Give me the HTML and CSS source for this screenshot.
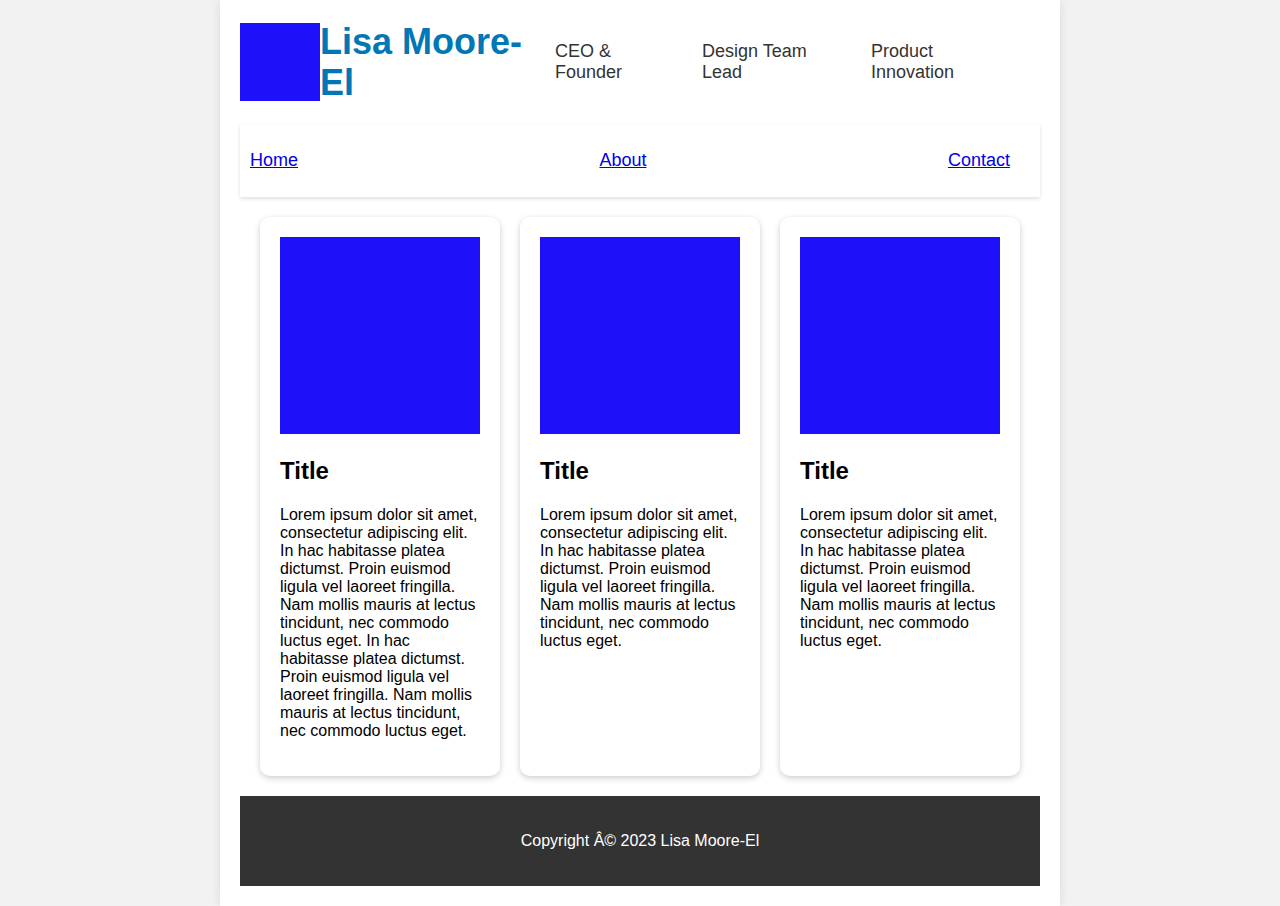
FILE: index.html
```html
<!DOCTYPE html>
<html lang="en">
<head>
<meta charset="utf-8">
<title>Lisa Moore-El</title>
<link rel="stylesheet" href="styles.css">
</head>
<body>
<div class="container">
  <header class="header">
    <div class="logo"></div>
    <h1 class="name">Lisa Moore-El</h1>
    <ul class="roles">
      <li class="role role-1">CEO &amp; Founder</li>
      <li class="role role-2">Design Team Lead</li>
      <li class="role role-3">Product Innovation</li>
    </ul>
  </header>
  <nav class="nav">
    <ul class="nav-list">
      <li><a href="#">Home</a></li>
      <li><a href="#">About</a></li>
      <li><a href="#">Contact</a></li>
    </ul>
  </nav>
  <section class="cards">
    <article class="card">
      <div class="card-img"></div>
      <h2 class="card-title">Title</h2>
      <p class="card-text">Lorem ipsum dolor sit amet, consectetur adipiscing elit. In hac habitasse platea dictumst. Proin euismod ligula vel laoreet fringilla. Nam mollis mauris at lectus tincidunt, nec commodo luctus eget. In hac habitasse platea dictumst. Proin euismod ligula vel laoreet fringilla. Nam mollis mauris at lectus tincidunt, nec commodo luctus eget.</p>
    </article>
    <article class="card">
      <div class="card-img"></div>
      <h2 class="card-title">Title</h2>
      <p class="card-text">Lorem ipsum dolor sit amet, consectetur adipiscing elit. In hac habitasse platea dictumst. Proin euismod ligula vel laoreet fringilla. Nam mollis mauris at lectus tincidunt, nec commodo luctus eget.</p>
    </article>
    <article class="card">
      <div class="card-img"></div>
      <h2 class="card-title">Title</h2>
      <p class="card-text">Lorem ipsum dolor sit amet, consectetur adipiscing elit. In hac habitasse platea dictumst. Proin euismod ligula vel laoreet fringilla. Nam mollis mauris at lectus tincidunt, nec commodo luctus eget.</p>
    </article>
  </section>
  <footer class="footer">
    <p>Copyright Â© 2023 Lisa Moore-El</p>
  </footer>
</div>
</body>
</html>
```

FILE: styles.css
```css
html, body {
  margin: 0;
  padding: 0;
}
body {
  background: #f2f2f2;
  font-family: "Liberation Sans", Arial, sans-serif;
  color: #000;
}
.container {
  width: 800px;
  margin: 0 auto;
  padding: 20px;
  background: #fff;
  box-shadow: 0 0 10px rgba(0, 0, 0, 0.1);
  min-height: 866px;
}
.header {
  display: flex;
  align-items: center;
  height: 84px;
  margin-bottom: 20px;
}
.logo {
  width: 80px;
  height: 78px;
  background: #1f10fa;
  flex: 0 0 auto;
}
.name {
  margin: 0;
  width: 215px;
  flex: 0 0 auto;
  font-size: 36px;
  line-height: 41px;
  font-weight: bold;
  color: #0077b6;
}
.roles {
  display: flex;
  list-style: none;
  margin: 0;
  padding: 0 20px;
  gap: 20px;
}
.role {
  font-size: 18px;
  line-height: 21px;
  color: #333;
}
.role-1 { width: 127px; }
.role-2 { width: 149px; }
.role-3 { width: 149px; }
.nav {
  padding: 10px;
  background: #fff;
  box-shadow: 0 2px 4px rgba(0, 0, 0, 0.12);
}
.nav-list {
  display: flex;
  justify-content: space-between;
  list-style: none;
  margin: 16px 0;
  padding: 0 20px 0 0;
  font-size: 18px;
  line-height: 21px;
}
.nav-list a {
  color: #0000ee;
  text-decoration: underline;
}
.cards {
  display: flex;
  gap: 20px;
  padding: 20px;
  align-items: stretch;
}
.card {
  width: 200px;
  padding: 20px;
  background: #fff;
  border-radius: 10px;
  box-shadow: 0 2px 6px rgba(0, 0, 0, 0.2);
}
.card-img {
  width: 200px;
  height: 197px;
  background: #1f10fa;
}
.card-title {
  margin: 23px 0 21px;
  font-size: 24px;
  line-height: 28px;
  font-weight: bold;
}
.card-text {
  margin: 0 0 16px;
  font-size: 16px;
  line-height: 18px;
}
.footer {
  background: #333;
  color: #fff;
  text-align: center;
  padding: 20px;
}
.footer p {
  margin: 16px 0;
  font-size: 16px;
  line-height: 18px;
}
```
